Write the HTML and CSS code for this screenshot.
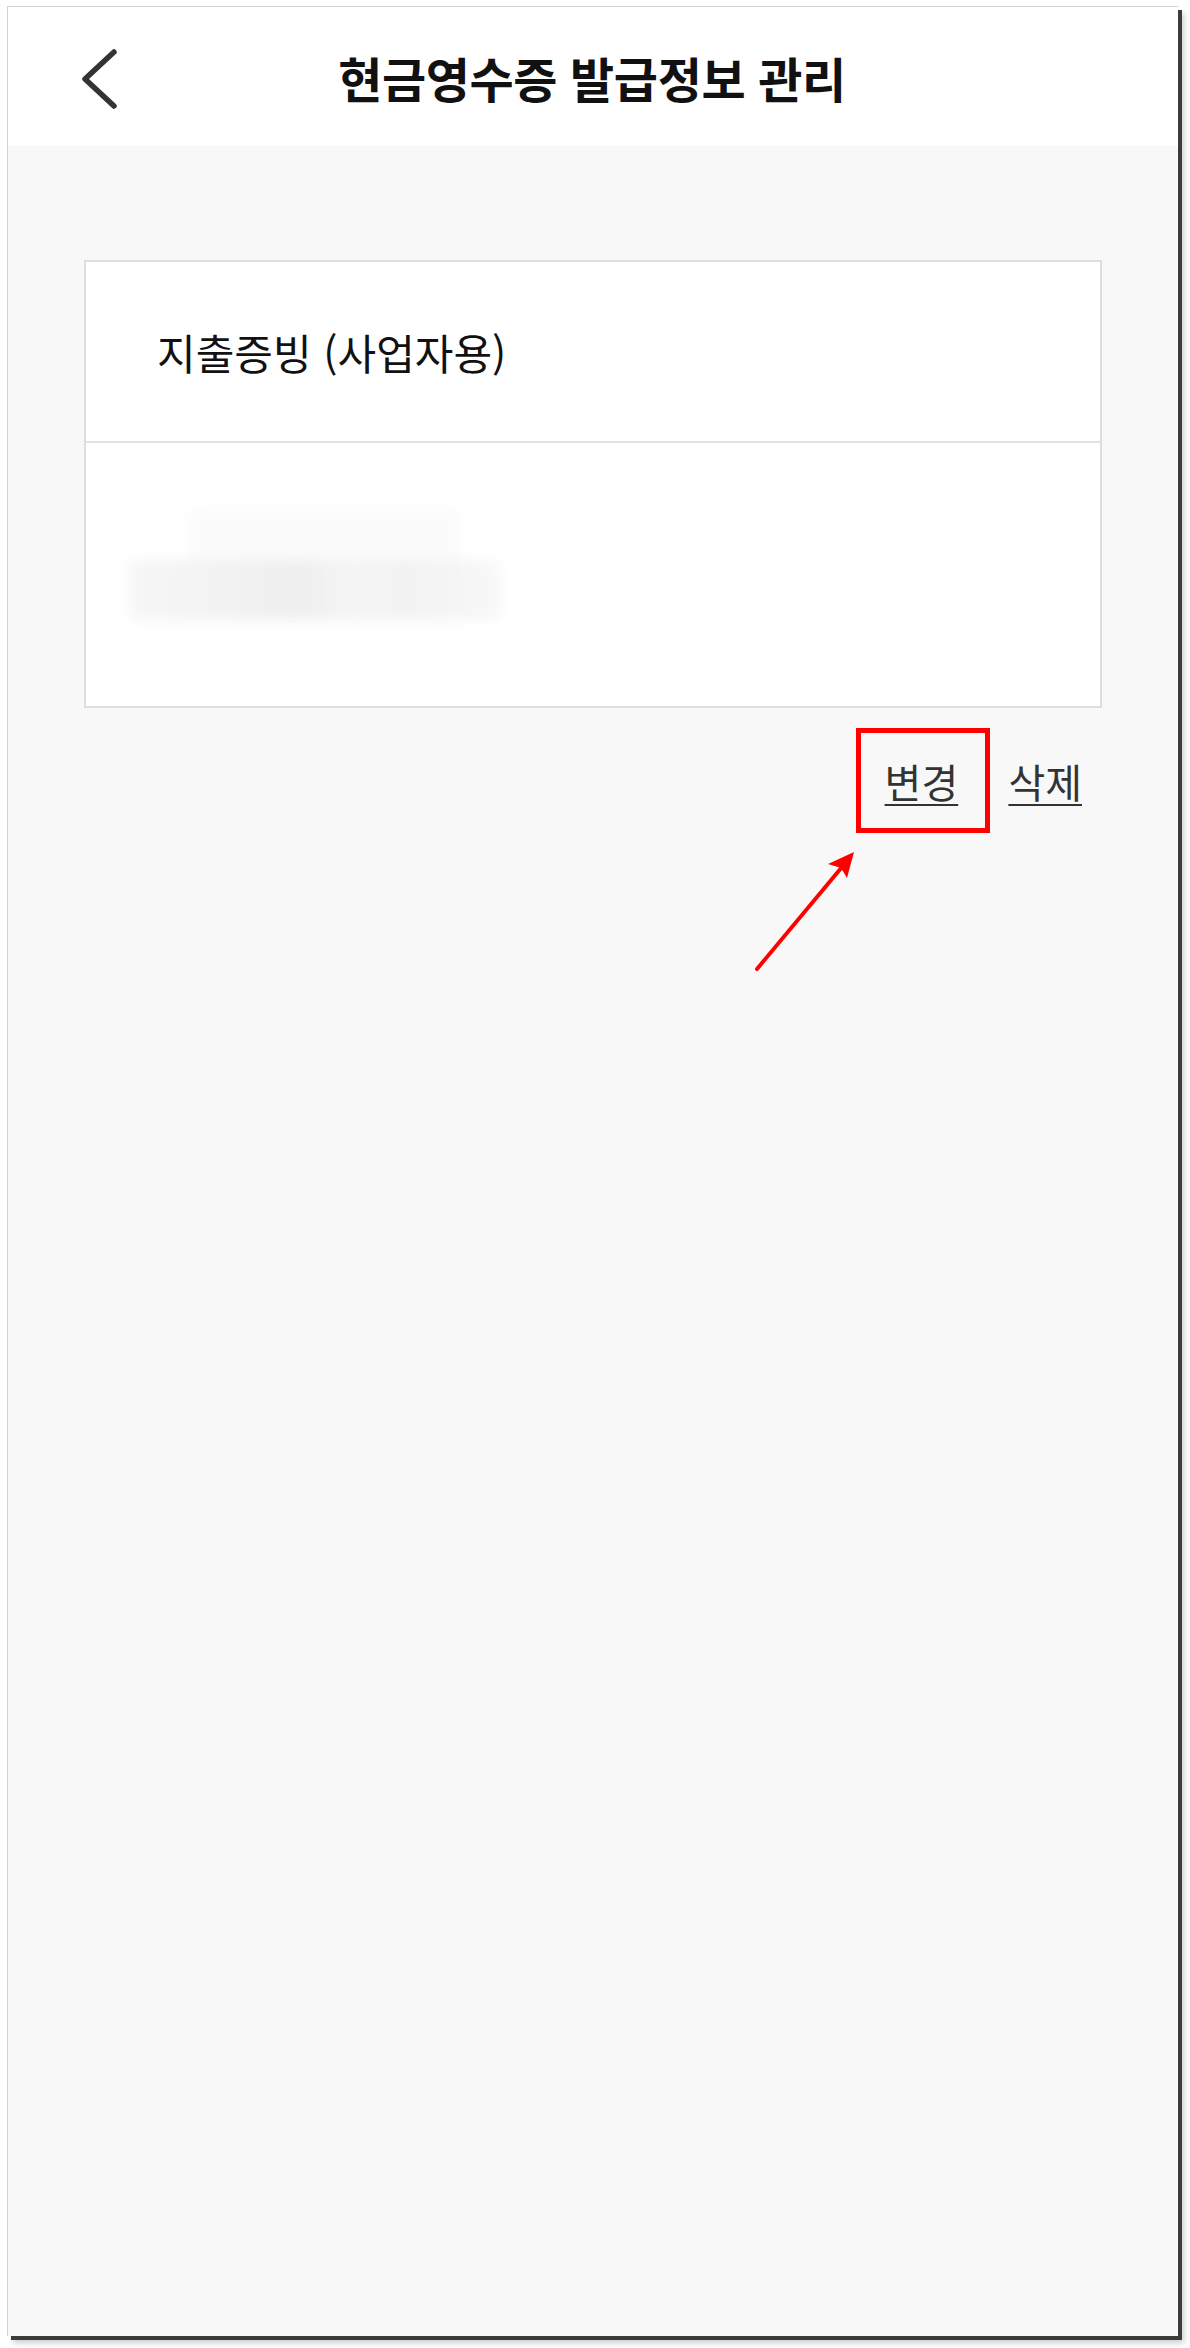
FILE: index.html
```html
<!DOCTYPE html>
<html lang="ko">

<head>
    <meta charset="UTF-8">
    <meta name="viewport" content="width=device-width, initial-scale=1.0">
    <title>현금영수증 발급정보 관리</title>
    <link rel="stylesheet" href="styles.css">
</head>

<body>

    <div class="frame">
        <header class="top-bar">
            <a class="back-btn" href="#" aria-label="뒤로">
                <svg width="40" height="62" viewBox="0 0 40 62">
                    <polyline points="34,4 5,31 34,58" fill="none" stroke="#333" stroke-width="5.5"
                        stroke-linecap="round" stroke-linejoin="round" />
                </svg>
            </a>
            <h1>현금영수증 발급정보 관리</h1>
            <span></span>
        </header>

        <main class="content">
            <div class="info-card">
                <div class="info-row type-row">지출증빙 (사업자용)</div>
                <div class="info-row number-row">
                    <!-- 번호는 가려져 있음 -->
                    <div class="blurred">
                        <span class="blur-top"></span>
                        <span class="blur-bottom"></span>
                    </div>
                </div>
            </div>

            <div class="actions">
                <span class="highlight-box"><a href="#" class="link-btn">변경</a></span>
                <a href="#" class="link-btn">삭제</a>

                <svg class="pointer-arrow" width="130" height="145" viewBox="0 0 130 145">
                    <line x1="17" y1="129" x2="102" y2="27" stroke="#f00" stroke-width="4" stroke-linecap="round" />
                    <polygon points="114,12 107,38 101,28 88,24" fill="#f00" />
                </svg>
            </div>
        </main>
    </div>

</body>

</html>
```

FILE: styles.css
```css
* {
    box-sizing: border-box;
}

html,
body {
    height: 2348px;
    overflow: hidden;
}

body {
    margin: 0;
    background-color: #fff;
    font-family: "Noto Sans CJK KR", "Noto Sans", sans-serif;
}

.frame {
    width: 1171px;
    height: 2330px;
    margin: 6px 0 0 7px;
    border-top: 1px solid #d4d4d4;
    border-left: 1px solid #d4d4d4;
    display: flex;
    flex-direction: column;
    overflow: hidden;
    box-shadow: 4px 4px 0 #3c3c3c, 6px 7px 6px rgba(0, 0, 0, 0.2);
}

.top-bar {
    flex: none;
    height: 139px;
    background-color: #fff;
    display: grid;
    grid-template-columns: 1fr auto 1fr;
    align-items: center;
}

.back-btn {
    display: block;
    width: 40px;
    height: 62px;
    margin-left: 72px;
    margin-top: 5px;
}

.top-bar h1 {
    margin: 0 0 0 -2px;
    font-size: 48px;
    font-weight: 700;
    color: #111;
    letter-spacing: -0.4px;
}

.content {
    flex: 1;
    background-color: #f8f8f8;
    padding: 114px 76px 0;
}

.info-card {
    background-color: #fff;
    border: 2px solid #dedede;
}

.info-row {
    display: flex;
    align-items: center;
}

.type-row {
    height: 181px;
    padding-left: 71px;
    font-size: 42px;
    color: #111;
    border-bottom: 2px solid #e2e2e2;
}

.number-row {
    height: 263px;
    padding-left: 44px;
}

.blurred {
    position: relative;
    width: 380px;
    height: 130px;
    margin-top: -24px;
    filter: blur(6px);
}

.blur-top {
    position: absolute;
    left: 60px;
    top: 12px;
    width: 270px;
    height: 55px;
    background-color: #fbfbfb;
}

.blur-bottom {
    position: absolute;
    left: 0;
    top: 62px;
    width: 370px;
    height: 60px;
    background: linear-gradient(90deg, #f6f6f6 0%, #efefef 45%, #f4f4f4 60%, #f2f2f2 75%, #f8f8f8 100%);
}

.actions {
    position: relative;
    margin-top: 20px;
    display: flex;
    justify-content: flex-end;
    align-items: center;
    gap: 18px;
    padding-right: 20px;
}

.highlight-box {
    display: flex;
    align-items: center;
    justify-content: center;
    width: 134px;
    height: 105px;
    padding-right: 4px;
    border: 5px solid #f00;
}

.link-btn {
    font-size: 40px;
    color: #333;
    text-decoration: underline;
    text-decoration-thickness: 2px;
    text-underline-offset: 6px;
    line-height: 1;
}

.pointer-arrow {
    position: absolute;
    left: 656px;
    top: 112px;
}
```
